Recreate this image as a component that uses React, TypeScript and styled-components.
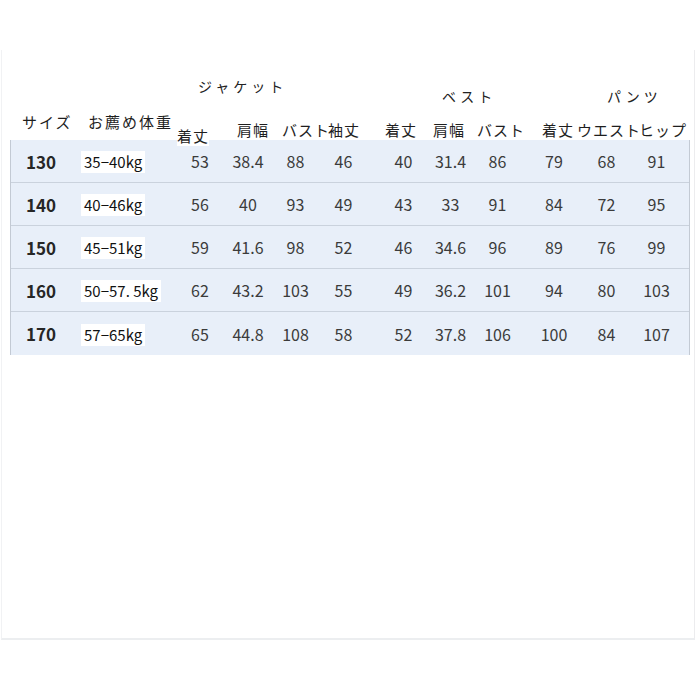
import styled, { createGlobalStyle } from "styled-components";

const cols = "63px 102px 48px 48px 47px 55px 53px 47px 53px 54px 51px 59px";
const font = `"Noto Sans CJK JP", "Noto Sans", sans-serif`;

// small horizontal nudges so each column's numbers sit where the sheet has them
const nudges = [0, 0, 0, -3, 3, 0, -3, 0, 0, -5];

const GlobalStyle = createGlobalStyle`
  body {
    margin: 0;
    background: #fff;
    font-family: ${font};
    color: #222;
  }
`;

const rows = [
  { size: "130", weight: "35−40kg", values: ["53", "38.4", "88", "46", "40", "31.4", "86", "79", "68", "91"] },
  { size: "140", weight: "40−46kg", values: ["56", "40", "93", "49", "43", "33", "91", "84", "72", "95"] },
  { size: "150", weight: "45−51kg", values: ["59", "41.6", "98", "52", "46", "34.6", "96", "89", "76", "99"] },
  { size: "160", weight: "50−57. 5kg", values: ["62", "43.2", "103", "55", "49", "36.2", "101", "94", "80", "103"] },
  { size: "170", weight: "57−65kg", values: ["65", "44.8", "108", "58", "52", "37.8", "106", "100", "84", "107"] },
];

const groups = [
  { label: "ジャケット", span: "3 / 7", pad: 23, top: true },
  { label: "ベスト", span: "7 / 10", pad: 69, top: false },
  { label: "パンツ", span: "10 / 13", pad: 81, top: false },
];

const heads = [
  { label: "着丈", start: 2, drop: 6 },
  { label: "肩幅", start: 14, drop: 0 },
  { label: "バスト", start: 11, drop: 0 },
  { label: "袖丈", start: 10, drop: 0 },
  { label: "着丈", start: 12, drop: 0 },
  { label: "肩幅", start: 7, drop: 0 },
  { label: "バスト", start: 4, drop: 0 },
  { label: "着丈", start: 16, drop: 0 },
  { label: "ウエスト", start: -3, drop: 0 },
  { label: "ヒップ", start: 8, drop: 0 },
];

const App = () => (
  <Page>
    <GlobalStyle />
    <Frame>
      <GroupRow>
        {groups.map((g) => (
          <GroupTitle key={g.label} $span={g.span} $pad={g.pad} $top={g.top}>
            {g.label}
          </GroupTitle>
        ))}
      </GroupRow>

      <HeadRow>
        <KeyTitle $pad={12}>サイズ</KeyTitle>
        <KeyTitle $pad={15}>お薦め体重</KeyTitle>
        {heads.map((h, i) => (
          <ColHead key={i} $start={h.start} $drop={h.drop}>
            {h.label}
          </ColHead>
        ))}
      </HeadRow>

      <Table>
        {rows.map((r) => (
          <DataRow key={r.size}>
            <SizeCell>{r.size}</SizeCell>
            <WeightCell>
              <WeightTag>{r.weight}</WeightTag>
            </WeightCell>
            {r.values.map((v, i) => (
              <NumCell key={i} $nudge={nudges[i]}>
                {v}
              </NumCell>
            ))}
          </DataRow>
        ))}
      </Table>
    </Frame>
  </Page>
);

const Page = styled.div`
  width: 700px;
  height: 700px;
  overflow: hidden;
`;

const Frame = styled.div`
  margin: 50px 0 0 1px;
  width: 694px;
  height: 590px;
  box-sizing: border-box;
  padding: 28px 0 0 8px;
  border-left: 1px solid #f1f2f4;
  border-right: 1px solid #ececee;
  border-bottom: 2px solid #eceef0;
`;

const GroupRow = styled.div`
  display: grid;
  grid-template-columns: ${cols};
  height: 26px;
`;

const GroupTitle = styled.div<{ $span: string; $pad: number; $top: boolean }>`
  grid-column: ${({ $span }) => $span};
  padding-left: ${({ $pad }) => $pad}px;
  align-self: ${({ $top }) => ($top ? "start" : "end")};
  font-size: 14px;
  line-height: 16px;
  letter-spacing: 4px;
  color: #222;
`;

const HeadRow = styled.div`
  display: grid;
  grid-template-columns: ${cols};
  height: 36px;
  position: relative;
  z-index: 1;
`;

const KeyTitle = styled.div<{ $pad: number }>`
  align-self: center;
  padding-left: ${({ $pad }) => $pad}px;
  font-size: 15px;
  line-height: 18px;
  letter-spacing: 2px;
  white-space: nowrap;
  color: #1e1e1e;
`;

const ColHead = styled.div<{ $start: number; $drop: number }>`
  align-self: end;
  justify-self: start;
  margin-left: ${({ $start }) => $start}px;
  margin-bottom: -${({ $drop }) => $drop}px;
  padding: 1px 0;
  background: #fff;
  font-size: 15px;
  line-height: 18px;
  letter-spacing: 1px;
  white-space: nowrap;
  color: #1e1e1e;
`;

const Table = styled.div`
  width: 680px;
  border-left: 1px solid #c3cad4;
  border-right: 1px solid #c3cad4;
  box-sizing: border-box;
  background: #e8eff9;
`;

const DataRow = styled.div`
  display: grid;
  grid-template-columns: ${cols};
  height: 43px;
  align-items: center;
  border-bottom: 1px solid #cad2dd;
  box-sizing: border-box;

  &:last-child {
    border-bottom: none;
  }
`;

const SizeCell = styled.div`
  padding-left: 15px;
  font-size: 17px;
  font-weight: 700;
  color: #262626;
`;

const WeightCell = styled.div`
  padding-left: 7px;
`;

const WeightTag = styled.span`
  display: inline-block;
  padding: 2px 3px;
  background: #fff;
  font-size: 15px;
  line-height: 18px;
  color: #111;
  white-space: nowrap;
`;

const NumCell = styled.div<{ $nudge: number }>`
  text-align: center;
  padding-left: ${({ $nudge }) => Math.max(0, $nudge * 2)}px;
  padding-right: ${({ $nudge }) => Math.max(0, -$nudge * 2)}px;
  font-size: 16px;
  color: #3b3b3b;
  white-space: nowrap;
`;

export default App;
